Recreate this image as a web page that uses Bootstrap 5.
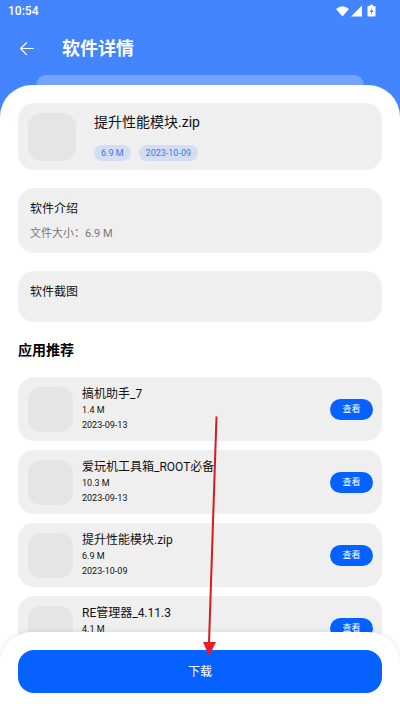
<!DOCTYPE html>
<html lang="zh-CN">
<head>
<meta charset="utf-8">
<meta name="viewport" content="width=device-width, initial-scale=1">
<title>软件详情</title>
<link href="https://cdn.jsdelivr.net/npm/bootstrap@5.3.0/dist/css/bootstrap.min.css" rel="stylesheet">
<style>
  body { font-family: Roboto, "Noto Sans CJK SC", sans-serif; background: #4285ff; color: #111; font-size: 9px; }
  .status-bar { height: 22px; padding: 0 23px 0 8px; font-size: 12px; }
  .title-bar { height: 53px; padding: 0 20px; gap: 28px; }
  .title-bar h1 { font-size: 18px; line-height: 24px; }
  .back-layer { height: 10px; margin: 0 36px; border-radius: 16px 16px 0 0; background: #75a4ff; }
  .sheet { min-height: 0; border-radius: 32px 32px 0 0; padding: 18px 18px 0; scrollbar-width: none; }
  .sheet::-webkit-scrollbar { display: none; }
  .panel { background: #efefef; border-radius: 16px; }
  .summary { padding: 9px 10px; gap: 18px; margin-bottom: 18px; }
  .thumb { width: 45px; height: 45px; border-radius: 13px; background: #e5e5e5; }
  .thumb-lg { width: 48px; height: 48px; border-radius: 14px; }
  .summary h2 { font-size: 14px; line-height: 20px; }
  .summary .chips { gap: 8px; margin-top: 13px; }
  .chip { background: #d3def3; color: #3c77e6; line-height: 16px; padding: 0 7px; font-size: 9px; }
  .info { padding: 12px 12px 11px; margin-bottom: 18px; }
  .info h2 { font-size: 12px; line-height: 18px; }
  .info p { font-size: 11px; line-height: 16px; margin-top: 8px; color: #777; }
  .shots { padding-bottom: 21px; margin-bottom: 18px; }
  .section-name { font-size: 14px; line-height: 20px; margin-bottom: 17px; color: #000; }
  .apps { gap: 9px; padding-bottom: 96px; }
  .app-row { height: 64px; padding: 0 9px 0 10px; gap: 9px; }
  .app-row h3 { font-size: 12px; line-height: 17px; }
  .app-row .meta { font-size: 9px; line-height: 15px; }
  .btn-main { background: #0561ff; color: #fff; border: 0; }
  .btn-main:hover { background: #0052e0; color: #fff; }
  .btn-view { width: 43px; height: 21px; font-size: 9px; line-height: 21px; }
  .download-bar { padding: 18px; border-radius: 32px 32px 0 0; box-shadow: 0 0 6px rgba(0,0,0,.1); }
  .btn-get { height: 43px; border-radius: 16px; font-size: 12px; line-height: 18px; }
  .pointer { left: 200px; top: 415px; z-index: 1040; pointer-events: none; }
</style>
</head>
<body>
<div class="vh-100 d-flex flex-column overflow-hidden">
  <header class="text-white flex-shrink-0">
    <div class="status-bar d-flex align-items-center justify-content-between">
      <span class="fw-medium">10:54</span>
      <svg width="42" height="14" viewBox="0 0 42 14" fill="#fff" aria-hidden="true">
        <path d="M1 5Q7.500 -.5 14 5L7.500 12.500Z"/>
        <path d="M27 1.500V12.500H16Z"/>
        <path fill-rule="evenodd" d="M35 2V.8h3V2h1.500q1 0 1 1v8.500q0 1-1 1h-6q-1 0-1-1V3q0-1 1-1ZM36.200 4.500V6.500H35v1.500h1.200v2h.8v-2h1.200V6.500H37V4.500Z"/>
      </svg>
    </div>
    <div class="title-bar d-flex align-items-center">
      <a href="#" class="d-flex text-white" aria-label="返回">
        <svg width="14" height="14" viewBox="0 0 14 14" fill="none" stroke="currentColor" stroke-width="1.200" stroke-linecap="round" stroke-linejoin="round" aria-hidden="true"><path d="M6.500 .8.600 6.500l5.900 6.200M.6 6.500H13.400"/></svg>
      </a>
      <h1 class="m-0 fw-bold">软件详情</h1>
    </div>
    <div class="back-layer"></div>
  </header>

  <main class="sheet bg-white flex-grow-1 overflow-auto">
    <section class="panel summary d-flex align-items-center">
      <div class="thumb thumb-lg flex-shrink-0"></div>
      <div>
        <h2 class="m-0 fw-normal">提升性能模块.zip</h2>
        <div class="chips d-flex">
          <span class="chip rounded-pill">6.9 M</span>
          <span class="chip rounded-pill">2023-10-09</span>
        </div>
      </div>
    </section>
    <section class="panel info">
      <h2 class="m-0 fw-normal">软件介绍</h2>
      <p class="mb-0">文件大小：6.9 M</p>
    </section>
    <section class="panel info shots">
      <h2 class="m-0 fw-normal">软件截图</h2>
    </section>

    <h2 class="section-name fw-bold">应用推荐</h2>
    <div class="apps d-flex flex-column">
      <article class="panel app-row d-flex align-items-center">
        <div class="thumb flex-shrink-0"></div>
        <div class="flex-grow-1"><h3 class="m-0 fw-normal">搞机助手_7</h3><div class="meta">1.4 M</div><div class="meta">2023-09-13</div></div>
        <button type="button" class="btn btn-main btn-view rounded-pill p-0">查看</button>
      </article>
      <article class="panel app-row d-flex align-items-center">
        <div class="thumb flex-shrink-0"></div>
        <div class="flex-grow-1"><h3 class="m-0 fw-normal">爱玩机工具箱_ROOT必备</h3><div class="meta">10.3 M</div><div class="meta">2023-09-13</div></div>
        <button type="button" class="btn btn-main btn-view rounded-pill p-0">查看</button>
      </article>
      <article class="panel app-row d-flex align-items-center">
        <div class="thumb flex-shrink-0"></div>
        <div class="flex-grow-1"><h3 class="m-0 fw-normal">提升性能模块.zip</h3><div class="meta">6.9 M</div><div class="meta">2023-10-09</div></div>
        <button type="button" class="btn btn-main btn-view rounded-pill p-0">查看</button>
      </article>
      <article class="panel app-row d-flex align-items-center">
        <div class="thumb flex-shrink-0"></div>
        <div class="flex-grow-1"><h3 class="m-0 fw-normal">RE管理器_4.11.3</h3><div class="meta">4.1 M</div><div class="meta">&nbsp;</div></div>
        <button type="button" class="btn btn-main btn-view rounded-pill p-0">查看</button>
      </article>
    </div>
  </main>
</div>

<footer class="download-bar fixed-bottom bg-white">
  <button type="button" class="btn btn-main btn-get w-100 p-0">下载</button>
</footer>

<svg class="pointer position-absolute" width="24" height="242" viewBox="0 0 24 242" aria-hidden="true">
  <path d="M16.500 1.500 9 228" stroke="#d71920" stroke-width="2" fill="none"/>
  <path d="M3 227H16L9 241Z" fill="#ed1c24"/>
</svg>
<script src="https://cdn.jsdelivr.net/npm/bootstrap@5.3.0/dist/js/bootstrap.bundle.min.js"></script>
</body>
</html>
